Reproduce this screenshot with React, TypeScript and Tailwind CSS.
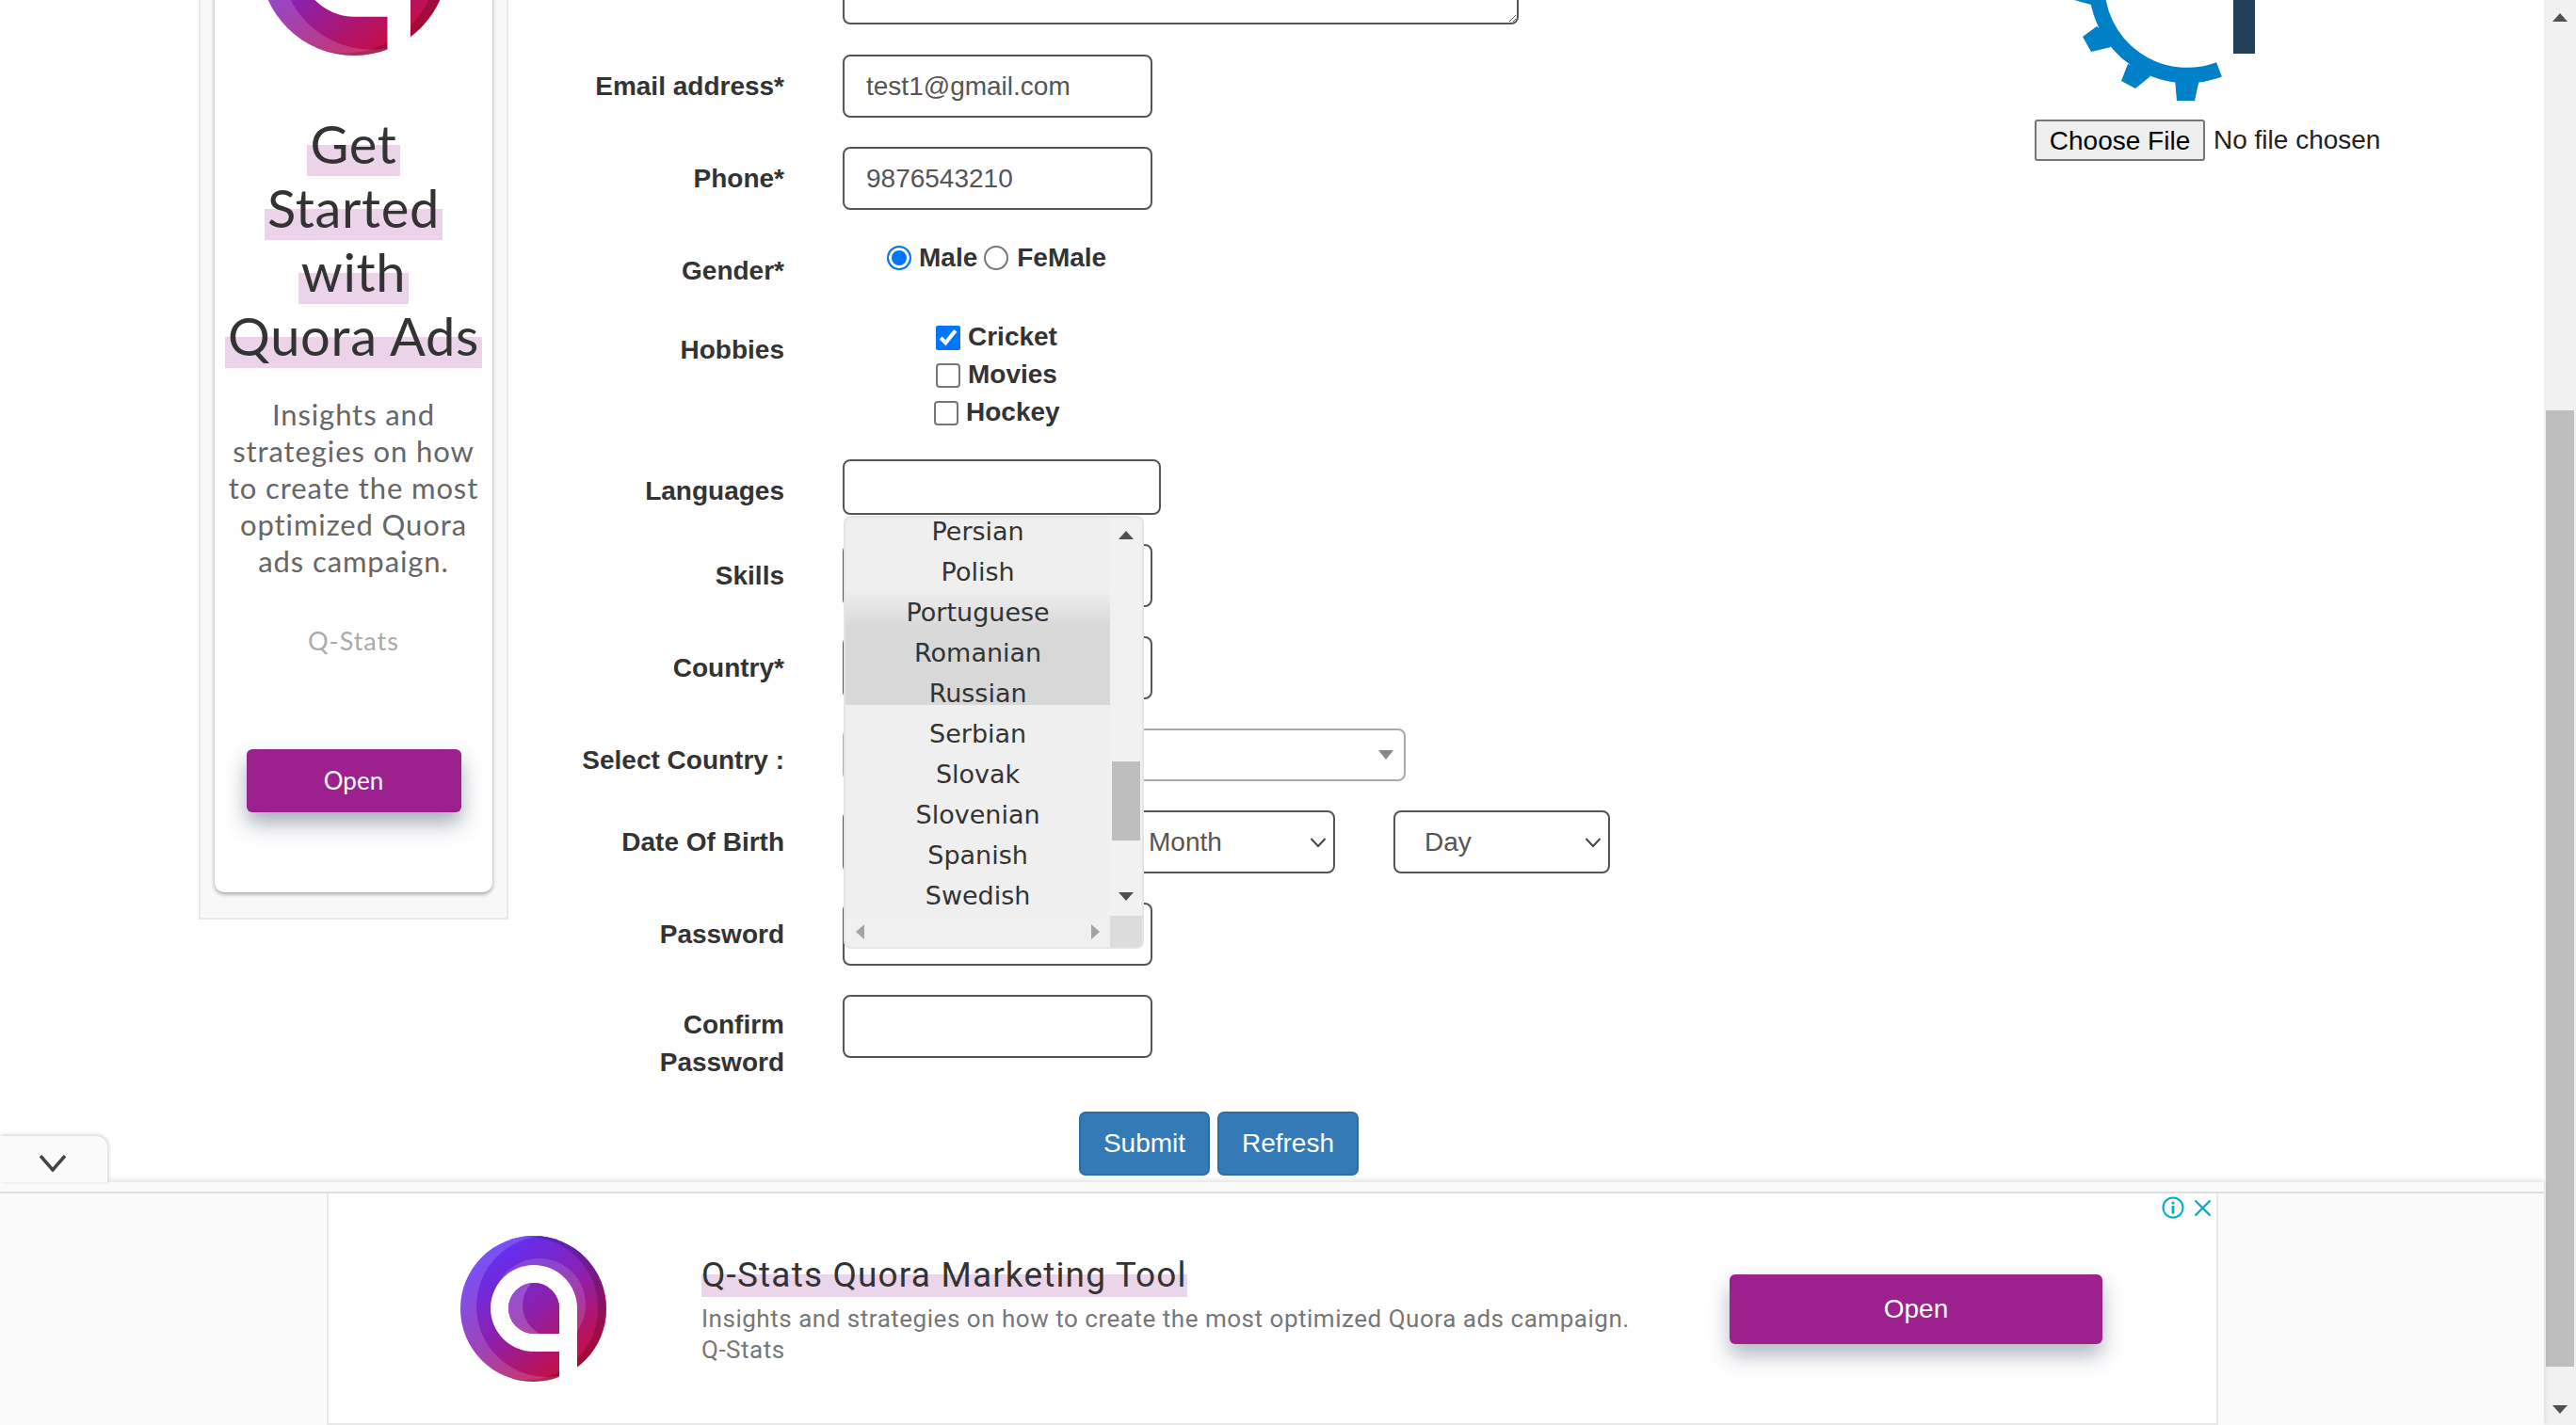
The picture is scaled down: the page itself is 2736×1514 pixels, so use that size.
const sans = "font-['Liberation_Sans',Arial,sans-serif]";

const QLogo = ({ size, id }: { size: number; id: string }) => (
  <svg width={size} height={size} viewBox="0 0 155 155" className="block shrink-0">
    <defs>
      <linearGradient id={id} gradientUnits="userSpaceOnUse" x1="25" y1="10" x2="125" y2="150">
        <stop offset="0" stopColor="#5a32ff" />
        <stop offset="0.5" stopColor="#8c20ac" />
        <stop offset="1" stopColor="#d20a30" />
      </linearGradient>
      <clipPath id={`${id}-disc`}>
        <circle cx="77.5" cy="77.5" r="77.5" />
      </clipPath>
      <clipPath id={`${id}-hole`}>
        <path d="M105 104 L105 77 A27 27 0 1 0 78 104 Z" />
      </clipPath>
    </defs>
    <g clipPath={`url(#${id}-disc)`}>
      <rect width="155" height="155" fill={`url(#${id})`} />
      <rect width="155" height="155" fill="#ffffff" opacity="0.16" />
      <circle cx="92" cy="75" r="75" fill={`url(#${id})`} />
      <circle cx="70" cy="77" r="80" fill="none" stroke="#000000" strokeWidth="8" opacity="0.18" />
      <circle cx="84" cy="73" r="49" fill="#ffffff" opacity="0.14" />
    </g>
    <path
      fillRule="evenodd"
      fill="#ffffff"
      d="M124 77 A46 46 0 1 0 78 123 L105 123 L105 156 L124 156 Z M105 104 L105 77 A27 27 0 1 0 78 104 Z"
    />
    <g clipPath={`url(#${id}-hole)`}>
      <rect x="50" y="50" width="55" height="54" fill={`url(#${id})`} />
      <rect x="50" y="50" width="55" height="54" fill="#ffffff" opacity="0.2" />
      <circle cx="100" cy="74" r="34" fill={`url(#${id})`} />
    </g>
  </svg>
);

const Gear = () => (
  <svg width="200" height="107" viewBox="2200 0 200 107" className="block ml-[39px]">
    <path d="M2227 -16 A96 96 0 0 0 2357 73.8" fill="none" stroke="#0080c6" strokeWidth="16.4" />
    <polygon fill="#0080c6" points="2203,0 2221,5 2226,0" />
    <polygon fill="#0080c6" points="2227,28 2212,39 2221,55 2242,50 2238,36" />
    <polygon fill="#0080c6" points="2260,68 2253,86 2268,94 2284,81 2272,72" />
    <polygon fill="#0080c6" points="2310,84 2312,107 2331,107 2336,84" />
    <rect x="2372" y="0" width="23" height="57" fill="#1f4058" />
  </svg>
);

const Chevron = () => (
  <svg width="18" height="12" viewBox="0 0 18 12" className="shrink-0">
    <polyline points="1.5,2 9,10 16.5,2" fill="none" stroke="#444" strokeWidth="2" />
  </svg>
);

const Tri = ({ dir, color, w = 16, h = 9 }: { dir: string; color: string; w?: number; h?: number }) => {
  const pts: Record<string, string> = {
    up: `0,${h} ${w},${h} ${w / 2},0`,
    down: `0,0 ${w},0 ${w / 2},${h}`,
    left: `${w},0 ${w},${h} 0,${h / 2}`,
    right: `0,0 0,${h} ${w},${h / 2}`,
  };
  return (
    <svg width={w} height={h} viewBox={`0 0 ${w} ${h}`} className="block shrink-0">
      <polygon points={pts[dir]} fill={color} />
    </svg>
  );
};

const Row = ({ label, pt, className, children }: any) => (
  <div className={`flex items-start ${className}`}>
    <div className={`w-[293px] mr-[62px] shrink-0 text-right font-bold text-[28px] leading-[40px] text-[#333] ${pt}`}>
      {label}
    </div>
    {children}
  </div>
);

const Field = ({ value, className }: { value?: string; className: string }) => (
  <input
    readOnly
    value={value ?? ''}
    className={`block bg-white border-2 border-[#555] rounded-lg pl-[23px] text-[28px] text-[#555] outline-none ${sans} ${className}`}
  />
);

const Sel = ({ text, className }: { text: string; className: string }) => (
  <div className={`flex items-center justify-between h-[67px] border-2 border-[#555] rounded-lg pl-[31px] pr-[7px] text-[28px] text-[#555] ${className}`}>
    {text}
    <Chevron />
  </div>
);

const Radio = ({ checked, className }: { checked?: boolean; className?: string }) => (
  <input
    type="radio"
    readOnly
    checked={!!checked}
    className={`appearance-none block w-[26px] h-[26px] m-0 rounded-full border-2 ${
      checked ? 'border-[#0075ff] bg-[#0075ff] shadow-[inset_0_0_0_3px_#ffffff]' : 'border-[#767676] bg-white'
    } ${className ?? ''}`}
  />
);

const EmptyCheck = () => (
  <input
    type="checkbox"
    readOnly
    checked={false}
    className="appearance-none block w-[26px] h-[26px] m-0 rounded-[4px] border-2 border-[#767676] bg-white"
  />
);

const languages = ['Persian', 'Polish', 'Portuguese', 'Romanian', 'Russian', 'Serbian', 'Slovak', 'Slovenian', 'Spanish', 'Swedish'];

const LanguageList = () => (
  <div className="absolute left-[1px] top-[60px] z-10 w-[319px] h-[460px] flex rounded-lg overflow-hidden bg-[#f0f0f0] border-2 border-[#e4e4e4] font-['DejaVu_Sans',sans-serif]">
    <div className="w-[283px] flex flex-col">
      <div className="h-[423px] overflow-hidden bg-[#eeeeee]">
        <div className="bg-[linear-gradient(#efefef_77px,#d8d8d8_117px,#d8d8d8_199px,#efefef_199px)] h-[423px]">
          {languages.map((lang) => (
            <div key={lang} className="h-[43px] leading-[29px] text-center text-[#333] text-[27px]">
              {lang}
            </div>
          ))}
        </div>
      </div>
      <div className="flex-1 flex items-center justify-between px-[11px] bg-[#f0f0f0]">
        <Tri dir="left" color="#a3a3a3" w={9} h={16} />
        <Tri dir="right" color="#a3a3a3" w={9} h={16} />
      </div>
    </div>
    <div className="w-[34px] flex flex-col">
      <div className="h-[423px] flex flex-col items-center bg-[#f1f1f1] relative">
        <div className="mt-[14px]">
          <Tri dir="up" color="#505050" />
        </div>
        <div className="mt-[236px] w-[30px] h-[84px] bg-[#bebebe]" />
        <div className="mt-[55px]">
          <Tri dir="down" color="#505050" />
        </div>
      </div>
      <div className="flex-1 bg-[#dcdcdc]" />
    </div>
  </div>
);

const AdFrame = () => (
  <div className="relative ml-[347px] w-[2009px] h-[246px] flex items-center bg-white border-2 border-[#e8e8e8] border-t-0">
    <div className="ml-[140px]">
      <QLogo size={155} id="q-bottom" />
    </div>
    <div className="ml-[101px] pt-[3px] w-[1000px] font-['Roboto',sans-serif]">
      <div>
        <span className="inline-block h-[46px] leading-[46px] text-[37px] tracking-[1.15px] text-[#333] bg-[linear-gradient(transparent_22px,#ebd5ea_22px)]">
          Q-Stats Quora Marketing Tool
        </span>
      </div>
      <div className="mt-[7px] text-[26px] leading-[33px] tracking-[0.52px] text-[#777]">
        Insights and strategies on how to create the most optimized Quora ads campaign.
      </div>
      <div className="text-[26px] leading-[33px] tracking-[0.52px] text-[#777]">Q-Stats</div>
    </div>
    <button className="absolute left-[1488px] top-[86px] w-[396px] h-[74px] rounded-md bg-[#9c218e] text-white text-[28px] shadow-[0_12px_22px_rgba(60,70,100,0.4)]">
      Open
    </button>
    <div className="absolute top-[3px] right-[5px] flex items-center gap-[10px]">
      <svg width="24" height="24" viewBox="0 0 24 24" className="block">
        <circle cx="12" cy="12" r="10.5" fill="none" stroke="#00aecd" strokeWidth="2" />
        <circle cx="12" cy="7" r="1.6" fill="#00aecd" />
        <rect x="10.6" y="10" width="2.8" height="8.5" fill="#00aecd" />
      </svg>
      <svg width="19" height="19" viewBox="0 0 19 19" className="block">
        <path d="M1.5 1.5 L17.5 17.5 M17.5 1.5 L1.5 17.5" stroke="#00aecd" strokeWidth="2.4" />
      </svg>
    </div>
  </div>
);

const SideAd = () => (
  <div className="ml-[211px] w-[329px] h-[1177px] mt-[-200px] shrink-0 px-[15px] bg-[#f8f8f9] border-2 border-[#e8e8ea] border-t-0">
    <div className="mt-[15px] h-[1133px] flex flex-col items-center bg-white rounded-[10px] shadow-[0_2px_4px_rgba(0,0,0,0.35)] font-['Lato',sans-serif]">
      <div className="mt-[44px]">
        <QLogo size={200} id="q-side" />
      </div>
      <div className="mt-[60px] flex flex-col items-center text-[56px] leading-[68px] tracking-[0.7px] text-[#333]">
        {['Get', 'Started', 'with', 'Quora Ads'].map((line) => (
          <span key={line} className="block h-[68px] px-[3px] whitespace-nowrap bg-[linear-gradient(transparent_35px,#ebd3ea_35px,#ebd3ea_68px)]">
            {line}
          </span>
        ))}
      </div>
      <div className="mt-[30px] text-center text-[31px] leading-[39px] tracking-[0.9px] whitespace-nowrap text-[#666]">
        Insights and
        <br />
        strategies on how
        <br />
        to create the most
        <br />
        optimized Quora
        <br />
        ads campaign.
      </div>
      <div className="mt-[49px] text-[27px] leading-[32px] tracking-[1px] text-[#aaa]">Q-Stats</div>
      <button className="mt-[99px] w-[228px] h-[67px] rounded-md bg-[#9c218e] text-white text-[26px] shadow-[0_12px_22px_rgba(60,70,100,0.45)]">
        Open
      </button>
    </div>
  </div>
);

const FormPanel = () => (
  <div className={`flex-1 min-w-0 ${sans}`}>
    <textarea
      readOnly
      className="block ml-[355px] mt-[-74px] w-[718px] h-[100px] resize bg-white border-2 border-[#555] rounded-lg outline-none"
    />
    <Row label="Email address*" pt="pt-[14px]" className="mt-[32px] h-[67px]">
      <Field value="test1@gmail.com" className="w-[329px] h-[67px]" />
    </Row>
    <Row label="Phone*" pt="pt-[14px]" className="mt-[31px] h-[67px]">
      <Field value="9876543210" className="w-[329px] h-[67px]" />
    </Row>
    <Row label="Gender*" pt="pt-[14px]" className="mt-[31px] h-[60px]">
      <div className="ml-[47px] mt-[7px] flex items-center font-bold text-[28px] leading-[26px] text-[#333]">
        <Radio checked />
        <span className="ml-[8px]">Male</span>
        <Radio className="ml-[7px]" />
        <span className="ml-[9px]">FeMale</span>
      </div>
    </Row>
    <Row label="Hobbies" pt="pt-[6px]" className="mt-[32px] h-[105px]">
      <div className="font-bold text-[28px] leading-[26px] text-[#333]">
        <label className="flex items-center ml-[99px]">
          <input type="checkbox" readOnly checked className="w-[26px] h-[26px] m-0 accent-[#0075ff]" />
          <span className="ml-[8px] mt-[-2px]">Cricket</span>
        </label>
        <label className="flex items-center ml-[99px] mt-[14px]">
          <EmptyCheck />
          <span className="ml-[8px] mt-[-2px]">Movies</span>
        </label>
        <label className="flex items-center ml-[97px] mt-[14px]">
          <EmptyCheck />
          <span className="ml-[8px] mt-[-2px]">Hockey</span>
        </label>
      </div>
    </Row>
    <Row label="Languages" pt="pt-[14px]" className="mt-[37px] h-[59px]">
      <div className="relative">
        <Field className="w-[338px] h-[59px]" />
        <LanguageList />
      </div>
    </Row>
    <Row label="Skills" pt="pt-[14px]" className="mt-[31px] h-[67px]">
      <Field className="w-[329px] h-[67px]" />
    </Row>
    <Row label="Country*" pt="pt-[14px]" className="mt-[31px] h-[67px]">
      <Field className="w-[329px] h-[67px]" />
    </Row>
    <Row label="Select Country :" pt="pt-[14px]" className="mt-[31px] h-[56px]">
      <div className="flex items-center justify-end w-[598px] h-[56px] pr-[11px] bg-white border-2 border-[#aaa] rounded-lg">
        <Tri dir="down" color="#888" h={10} />
      </div>
    </Row>
    <Row label="Date Of Birth" pt="pt-[14px]" className="mt-[31px] h-[67px]">
      <Sel text="Year" className="w-[230px]" />
      <Sel text="Month" className="w-[231px] ml-[62px]" />
      <Sel text="Day" className="w-[230px] ml-[62px]" />
    </Row>
    <Row label="Password" pt="pt-[14px]" className="mt-[31px] h-[67px]">
      <Field className="w-[329px] h-[67px]" />
    </Row>
    <Row
      label={
        <>
          Confirm
          <br />
          Password
        </>
      }
      pt="pt-[12px]"
      className="mt-[31px] h-[67px]"
    >
      <Field className="w-[329px] h-[67px]" />
    </Row>
    <div className="mt-[57px] ml-[606px] flex gap-[8px] text-[28px] text-white">
      <button className="w-[139px] h-[68px] rounded-[7px] bg-[#337ab7] border-2 border-[#2e6da4]">Submit</button>
      <button className="w-[150px] h-[68px] rounded-[7px] bg-[#337ab7] border-2 border-[#2e6da4]">Refresh</button>
    </div>
  </div>
);

const Scrollbar = () => (
  <div className="w-[34px] shrink-0 flex flex-col items-center bg-[#f1f1f1]">
    <div className="mt-[14px]">
      <Tri dir="up" color="#505050" />
    </div>
    <div className="mt-[413px] w-[30px] h-[1016px] bg-[#bebebe]" />
    <div className="mt-[41px]">
      <Tri dir="down" color="#505050" />
    </div>
  </div>
);

export default function App() {
  return (
    <div className={`relative w-[2736px] h-[1514px] overflow-hidden flex bg-white ${sans}`}>
      <SideAd />
      <FormPanel />
      <div className={`w-[541px] shrink-0 ${sans}`}>
        <Gear />
        <div className="mt-[20px] flex items-center text-[28px] text-[#222]">
          <button className="w-[181px] h-[44px] bg-[#efefef] border-2 border-[#767676] rounded-[3px] text-black">
            Choose File
          </button>
          <span className="ml-[9px]">No file chosen</span>
        </div>
      </div>
      <Scrollbar />

      {/* sticky ad at the bottom of the page */}
      <div className="absolute left-0 right-[34px] bottom-0 h-[258px] bg-[#fafafa] shadow-[0_-2px_6px_rgba(0,0,0,0.12)]">
        <div className="absolute left-0 top-[-49px] w-[114px] h-[49px] pt-[8px] pr-[2px] flex items-center justify-center bg-[#fbfbfb] rounded-tr-[12px] shadow-[1px_-1px_4px_rgba(0,0,0,0.2)]">
          <svg width="30" height="18" viewBox="0 0 30 18" className="block">
            <polyline points="2,1 15,16 28,1" fill="none" stroke="#444" strokeWidth="3.5" />
          </svg>
        </div>
        <div className="h-[10px] bg-[#fafafa] border-b-2 border-[#dedede] box-content" />
        <AdFrame />
      </div>
    </div>
  );
}
